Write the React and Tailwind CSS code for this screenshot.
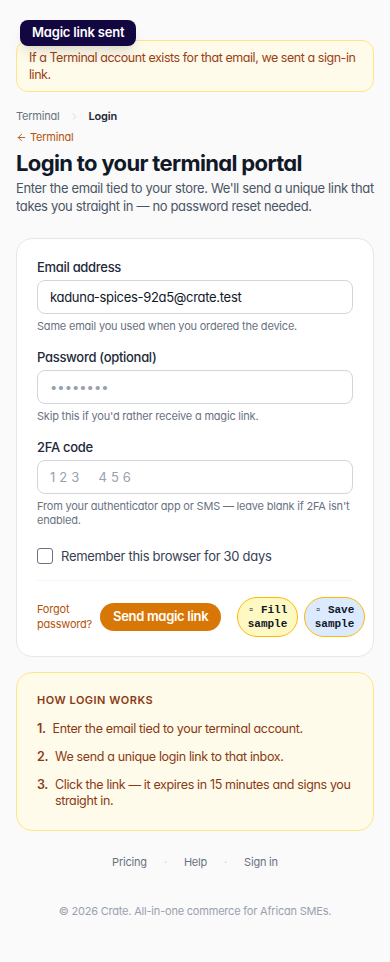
import { ChevronRight, ArrowLeft } from 'lucide-react'

const font = "font-['Inter',sans-serif] [font-feature-settings:'cv11']"

const Field = ({ label, children, hint }) => (
    <div className="flex flex-col">
        <label className="text-[13px] leading-[16px] tracking-[-0.3px] font-medium text-gray-800 mb-[5px]">{label}</label>
        {children}
        <p className="text-[11px] leading-[14px] tracking-[-0.2px] text-gray-500 mt-[5px]">{hint}</p>
    </div>
)

const App = () => {
    return (
        <div className={`${font} bg-[#fafafa] min-h-[962px] w-[390px] relative text-gray-900`}>
            <div className="absolute left-[20px] top-[20px] z-10 bg-[#130741] text-white text-[13px] tracking-[-0.2px] font-semibold px-[12px] h-[26px] flex items-center rounded-lg shadow-lg">
                Magic link sent
            </div>

            <div className="px-4 pt-10">
                <div className="border border-amber-200 bg-[#fffbeb] rounded-xl px-[12px] py-[8px] text-[12.5px] leading-[17px] tracking-[-0.45px] text-[#9a3f12]">
                    If a Terminal account exists for that email, we sent a sign-in link.
                </div>

                <nav className="flex items-center gap-[9px] text-[11px] leading-[16px] tracking-[-0.2px] mt-[16px]">
                    <span className="text-gray-500">Terminal</span>
                    <ChevronRight size={11} className="text-gray-300" />
                    <span className="font-semibold text-gray-800">Login</span>
                </nav>

                <a className="flex items-center gap-[3px] text-[11px] leading-[16px] tracking-[-0.2px] text-[#b45309] mt-[5px]">
                    <ArrowLeft size={11} />
                    Terminal
                </a>

                <h1 className="text-[22px] leading-[28px] font-bold text-[#111827] tracking-[-0.65px] mt-[4px]">Login to your terminal portal</h1>
                <p className="text-[13px] leading-[18px] tracking-[-0.35px] text-gray-600 mt-[2px]">
                    Enter the email tied to your store. We'll send a unique link that takes you straight in — no password reset needed.
                </p>

                <div className="bg-white border border-gray-200 rounded-2xl mt-[23px] px-5 pt-[20px] pb-[19px] flex flex-col gap-[16px]">
                    <Field label="Email address" hint="Same email you used when you ordered the device.">
                        <input
                            defaultValue="kaduna-spices-92a5@crate.test"
                            className="h-[34px] border border-gray-300 rounded-lg px-[12px] text-[13px] tracking-[-0.3px] text-gray-900 outline-none"
                        />
                    </Field>
                    <Field label="Password (optional)" hint="Skip this if you'd rather receive a magic link.">
                        <input
                            type="password"
                            placeholder="••••••••"
                            className="h-[34px] border border-gray-300 rounded-lg px-[12px] text-[13px] placeholder-gray-400 outline-none"
                        />
                    </Field>
                    <Field label="2FA code" hint="From your authenticator app or SMS — leave blank if 2FA isn't enabled.">
                        <input
                            placeholder="123  456"
                            className="h-[34px] border border-gray-300 rounded-lg px-[12px] text-[13px] tracking-[4px] placeholder-gray-400 outline-none"
                        />
                    </Field>

                    <label className="flex items-center gap-2 text-[13px] leading-[16px] tracking-[-0.3px] text-gray-700 mt-[5px]">
                        <span className="w-4 h-4 border border-gray-500 rounded-[3px] bg-white" />
                        Remember this browser for 30 days
                    </label>

                    <div className="border-t border-gray-100 pt-[16px] flex items-center">
                        <a className="text-[11px] leading-[15px] tracking-[-0.2px] text-[#b45309] w-[64px]">Forgot password?</a>
                        <button className="bg-[#d97706] text-white text-[13px] tracking-[-0.3px] font-semibold h-[28px] w-[122px] rounded-full">
                            Send magic link
                        </button>
                        <button className="ml-[16px] w-[61px] h-[40px] rounded-full border border-amber-400 bg-[#fef9c3] font-['Liberation_Mono',monospace] font-bold text-[11px] leading-[14px] text-gray-900 shrink-0">
                            ▫ Fill sample
                        </button>
                        <button className="ml-[6px] w-[61px] h-[40px] rounded-full border border-amber-400 bg-[#dbeafe] font-['Liberation_Mono',monospace] font-bold text-[11px] leading-[14px] text-gray-900 shrink-0 -mr-[12px]">
                            ▫ Save sample
                        </button>
                    </div>
                </div>

                <div className="mt-[15px] border border-amber-200 bg-[#fffbeb] rounded-2xl px-5 pt-[19px] pb-[21px] text-[#8a3a12]">
                    <h2 className="text-[11px] leading-[16px] font-semibold tracking-[0.5px] uppercase">How login works</h2>
                    <ol className="mt-[13px] flex flex-col gap-[12px] text-[12.5px] leading-[16px] tracking-[-0.35px]">
                        <li className="flex gap-[7px]"><span className="font-semibold">1.</span><span>Enter the email tied to your terminal account.</span></li>
                        <li className="flex gap-[7px]"><span className="font-semibold">2.</span><span>We send a unique login link to that inbox.</span></li>
                        <li className="flex gap-[7px]"><span className="font-semibold">3.</span><span>Click the link — it expires in 15 minutes and signs you straight in.</span></li>
                    </ol>
                </div>

                <footer className="mt-[23px] flex flex-col items-center">
                    <div className="flex items-center gap-[17px] text-[11px] leading-[16px] tracking-[-0.2px] text-gray-500">
                        <a>Pricing</a>
                        <span className="text-gray-300">·</span>
                        <a>Help</a>
                        <span className="text-gray-300">·</span>
                        <a>Sign in</a>
                    </div>
                    <p className="text-[11px] leading-[16px] tracking-[-0.2px] text-gray-400 mt-[33px]">© 2026 Crate. All-in-one commerce for African SMEs.</p>
                </footer>
            </div>
        </div>
    )
}

export default App
